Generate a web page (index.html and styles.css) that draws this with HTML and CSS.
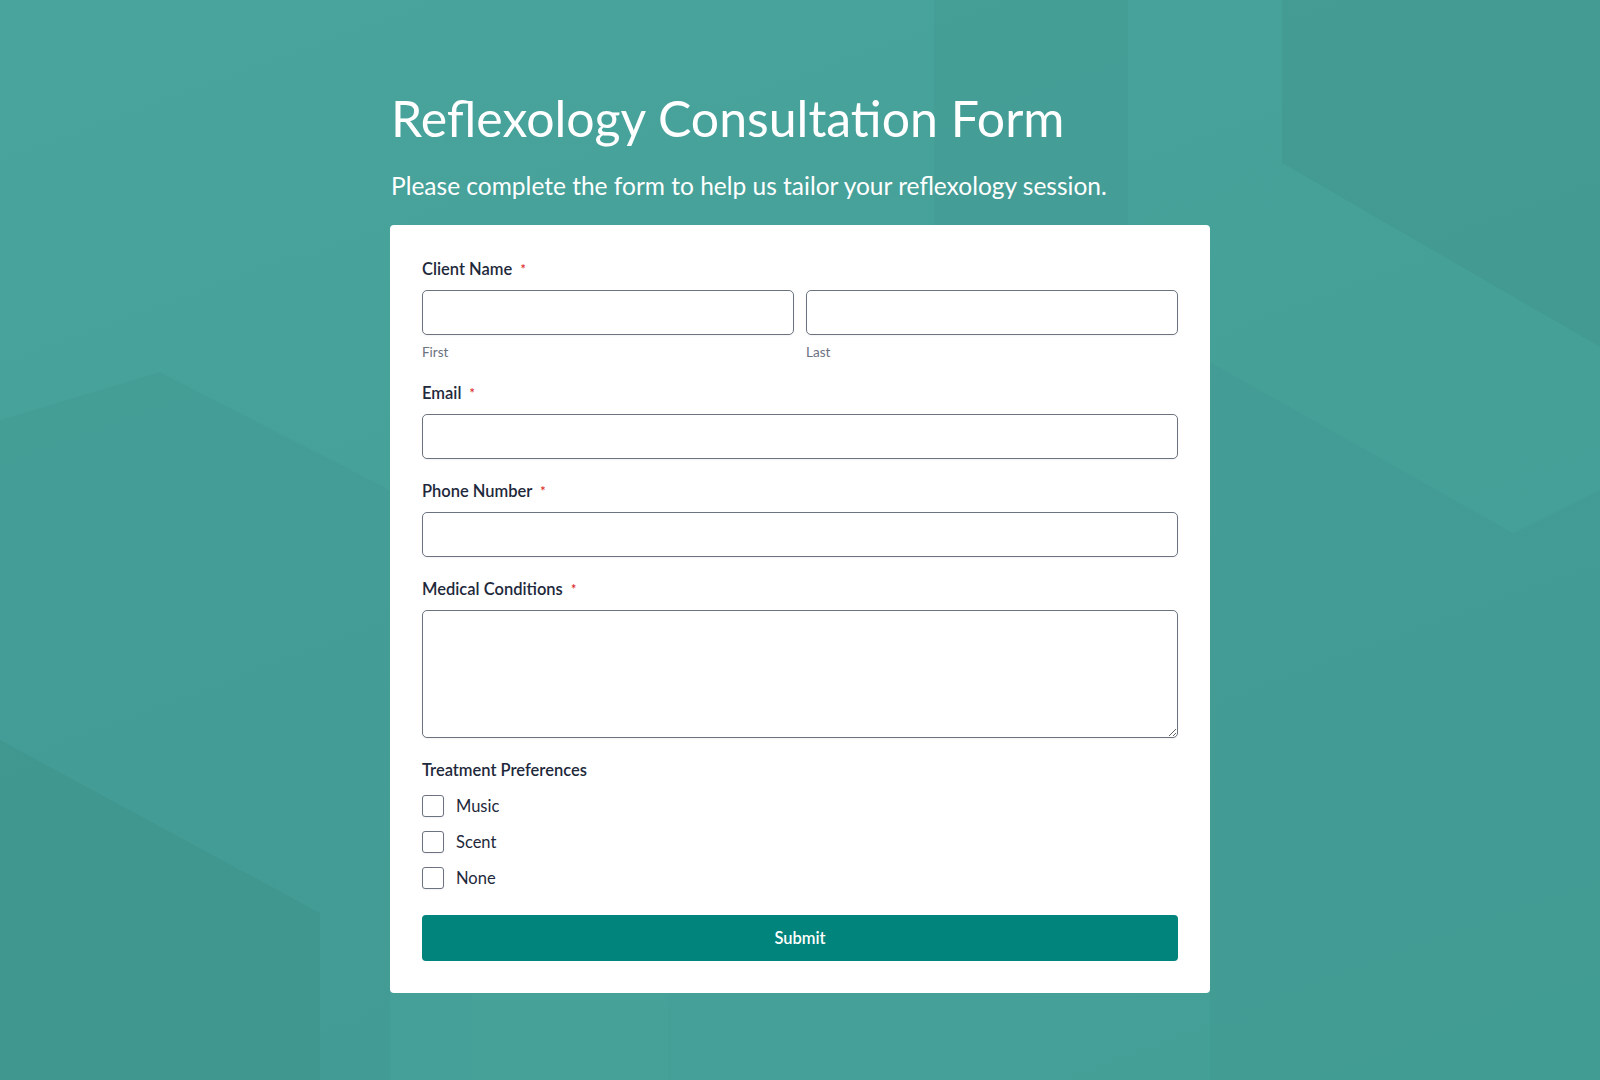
FILE: index.html
```html
<!DOCTYPE html>
<html lang="en">
<head>
<meta charset="utf-8">
<title>Reflexology Consultation Form</title>
<link rel="stylesheet" href="styles.css">
</head>
<body>
<svg class="bg" viewBox="0 0 1600 1080" preserveAspectRatio="none" aria-hidden="true">
  <polygon points="934,0 1128,0 1128,226 934,226" fill="#000" fill-opacity="0.02"/>
  <polygon points="1282,0 1600,0 1600,347 1282,163" fill="#000" fill-opacity="0.035"/>
  <polygon points="1210,362 1513,533 1600,490 1600,1080 1210,1080" fill="#000" fill-opacity="0.018"/>
  <polygon points="0,420 160,372 390,490 390,1080 0,1080" fill="#000" fill-opacity="0.018"/>
  <polygon points="0,740 320,913 320,1080 0,1080" fill="#000" fill-opacity="0.03"/>
  <polygon points="472,992 668,992 668,1080 472,1080" fill="#fff" fill-opacity="0.015"/>
</svg>
<main class="page">
  <header class="intro">
    <h1 class="title">Reflexology Consultation Form</h1>
    <p class="subtitle">Please complete the form to help us tailor your reflexology session.</p>
  </header>
  <form class="card">
    <div class="field">
      <div class="label">Client Name <span class="req">*</span></div>
      <div class="name-row">
        <div class="name-col">
          <input class="input" type="text">
          <div class="sublabel">First</div>
        </div>
        <div class="name-col">
          <input class="input" type="text">
          <div class="sublabel">Last</div>
        </div>
      </div>
    </div>
    <div class="field">
      <label class="label">Email <span class="req">*</span></label>
      <input class="input" type="email">
    </div>
    <div class="field">
      <label class="label">Phone Number <span class="req">*</span></label>
      <input class="input" type="tel">
    </div>
    <div class="field">
      <label class="label">Medical Conditions <span class="req">*</span></label>
      <textarea class="input textarea"></textarea>
    </div>
    <div class="field">
      <div class="label">Treatment Preferences</div>
      <div class="checks">
        <label class="check"><span class="box"></span><span>Music</span></label>
        <label class="check"><span class="box"></span><span>Scent</span></label>
        <label class="check"><span class="box"></span><span>None</span></label>
      </div>
    </div>
    <button class="submit" type="button">Submit</button>
  </form>
</main>
</body>
</html>
```
FILE: styles.css
```css
* { box-sizing: border-box; }
html, body { margin: 0; padding: 0; }
body {
  min-height: 1080px;
  background: linear-gradient(160deg, #48a49c 0%, #45a098 50%, #43a097 100%);
  font-family: Lato, "Open Sans", sans-serif;
  color: #1e293b;
  position: relative;
  overflow: hidden;
}
.bg {
  position: absolute;
  left: 0; top: 0;
  width: 1600px; height: 1080px;
  z-index: 0;
}
.page {
  position: relative;
  z-index: 1;
  width: 820px;
  margin: 0 auto;
  padding-top: 84px;
}
.intro { padding-left: 1px; }
.title {
  margin: 0;
  font-size: 50px;
  font-weight: 400;
  line-height: 68px;
  color: #fff;
}
.subtitle {
  margin: 0;
  padding-top: 16px;
  font-size: 24.5px;
  line-height: 36px;
  color: #fff;
}
.card {
  margin-top: 21px;
  background: #fff;
  border-radius: 4px;
  padding: 32px;
  display: flex;
  flex-direction: column;
  gap: 20px;
}
.field { display: flex; flex-direction: column; }
.label {
  font-size: 16.5px;
  line-height: 24px;
  font-weight: 600;
  color: #1e293b;
  margin-bottom: 8px;
}
.req { color: #dc2626; font-size: 12.5px; margin-left: 4px; vertical-align: 1px; }
.name-row { display: flex; gap: 12px; }
.name-col { flex: 1; display: flex; flex-direction: column; }
.input {
  display: block;
  width: 100%;
  height: 45px;
  border: 1px solid #6b7280;
  border-radius: 5px;
  background: #fff;
  font-family: inherit;
  font-size: 16px;
  padding: 0 12px;
  box-shadow: 0 1px 2px rgba(0,0,0,0.05);
}
.textarea { height: 128px; resize: vertical; }
.sublabel {
  margin-top: 8px;
  font-size: 13.5px;
  line-height: 18px;
  color: #6b7280;
}
.checks { display: flex; flex-direction: column; gap: 12px; padding-top: 4px; }
.check {
  display: flex;
  align-items: center;
  gap: 12px;
  font-size: 16.5px;
  line-height: 24px;
  color: #1e293b;
}
.box {
  width: 22px; height: 22px;
  border: 1px solid #6b7280;
  border-radius: 3px;
  background: #fff;
  box-shadow: 0 1px 2px rgba(0,0,0,0.05);
}
.submit {
  margin-top: 5px;
  height: 46px;
  border: none;
  border-radius: 4px;
  background: #00847b;
  color: #fff;
  font-family: inherit;
  font-size: 16.5px;
  font-weight: 600;
}
```
